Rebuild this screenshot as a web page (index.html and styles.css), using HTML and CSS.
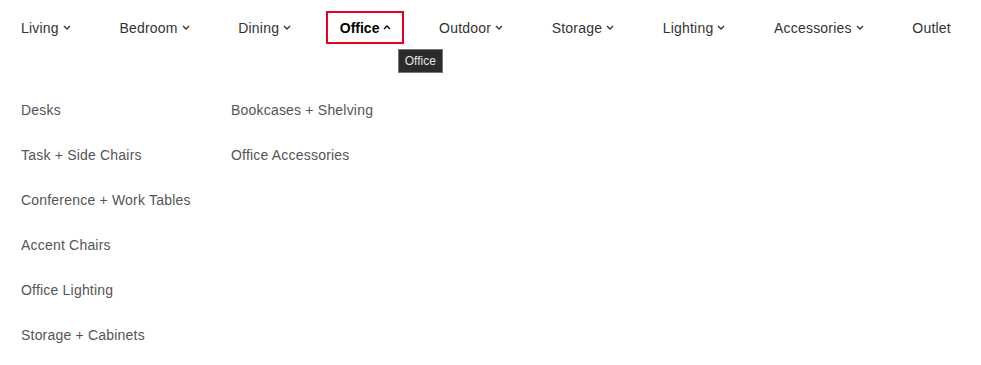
FILE: index.html
```html
<!DOCTYPE html>
<html lang="en">
<head>
    <meta charset="UTF-8">
    <meta name="viewport" content="width=device-width, initial-scale=1.0">
    <title>Office</title>
    <link rel="stylesheet" href="styles.css">
</head>
<body>
    <nav class="main-nav">
        <a class="nav-item" href="#">Living <svg class="chev" viewBox="0 0 8 5"><path d="M1 1l3 3 3-3"/></svg></a>
        <a class="nav-item" href="#">Bedroom <svg class="chev" viewBox="0 0 8 5"><path d="M1 1l3 3 3-3"/></svg></a>
        <a class="nav-item" href="#">Dining <svg class="chev" viewBox="0 0 8 5"><path d="M1 1l3 3 3-3"/></svg></a>
        <a class="nav-item active" href="#">Office <svg class="chev" viewBox="0 0 8 5"><path d="M1 4l3-3 3 3"/></svg>
            <span class="tooltip">Office</span>
        </a>
        <a class="nav-item" href="#">Outdoor <svg class="chev" viewBox="0 0 8 5"><path d="M1 1l3 3 3-3"/></svg></a>
        <a class="nav-item" href="#">Storage <svg class="chev" viewBox="0 0 8 5"><path d="M1 1l3 3 3-3"/></svg></a>
        <a class="nav-item" href="#">Lighting <svg class="chev" viewBox="0 0 8 5"><path d="M1 1l3 3 3-3"/></svg></a>
        <a class="nav-item" href="#">Accessories <svg class="chev" viewBox="0 0 8 5"><path d="M1 1l3 3 3-3"/></svg></a>
        <a class="nav-item" href="#">Outlet</a>
    </nav>

    <div class="submenu">
        <ul class="sub-col">
            <li><a href="#">Desks</a></li>
            <li><a href="#">Task + Side Chairs</a></li>
            <li><a href="#">Conference + Work Tables</a></li>
            <li><a href="#">Accent Chairs</a></li>
            <li><a href="#">Office Lighting</a></li>
            <li><a href="#">Storage + Cabinets</a></li>
        </ul>
        <ul class="sub-col">
            <li><a href="#">Bookcases + Shelving</a></li>
            <li><a href="#">Office Accessories</a></li>
        </ul>
    </div>
</body>
</html>
```

FILE: styles.css
```css
body {
    margin: 0;
    background: #fff;
    font-family: "Liberation Sans", Arial, sans-serif;
    color: #333;
}

a {
    text-decoration: none;
    color: inherit;
}

.main-nav {
    display: flex;
    justify-content: space-between;
    align-items: center;
    padding: 11px 30px 0 21px;
}

.nav-item {
    position: relative;
    display: flex;
    align-items: center;
    height: 33px;
    font-size: 14px;
    color: #333;
    letter-spacing: 0.2px;
}

.chev {
    width: 8px;
    height: 5px;
    margin-left: 4px;
    fill: none;
    stroke: #333;
    stroke-width: 1.3;
}

.nav-item.active {
    font-weight: bold;
    color: #000;
    letter-spacing: 0;
    margin: 0 -14px;
    padding: 0 11px 0 12px;
    border: 2px solid #e8001c;
    box-sizing: border-box;
}

.nav-item.active .chev {
    stroke: #000;
}

.tooltip {
    position: absolute;
    top: 36px;
    left: 70px;
    background: #2b2b2b;
    border: 1px solid #777;
    color: #e4e4e4;
    font-weight: normal;
    font-size: 12px;
    padding: 5px 6px;
    white-space: nowrap;
    line-height: 12px;
}

.submenu {
    display: flex;
    padding: 56px 0 0 21px;
}

.sub-col {
    list-style: none;
    margin: 0;
    padding: 0;
    width: 210px;
}

.sub-col li {
    height: 45px;
    font-size: 14px;
    line-height: 20px;
    color: #555;
    letter-spacing: 0.2px;
}
```
